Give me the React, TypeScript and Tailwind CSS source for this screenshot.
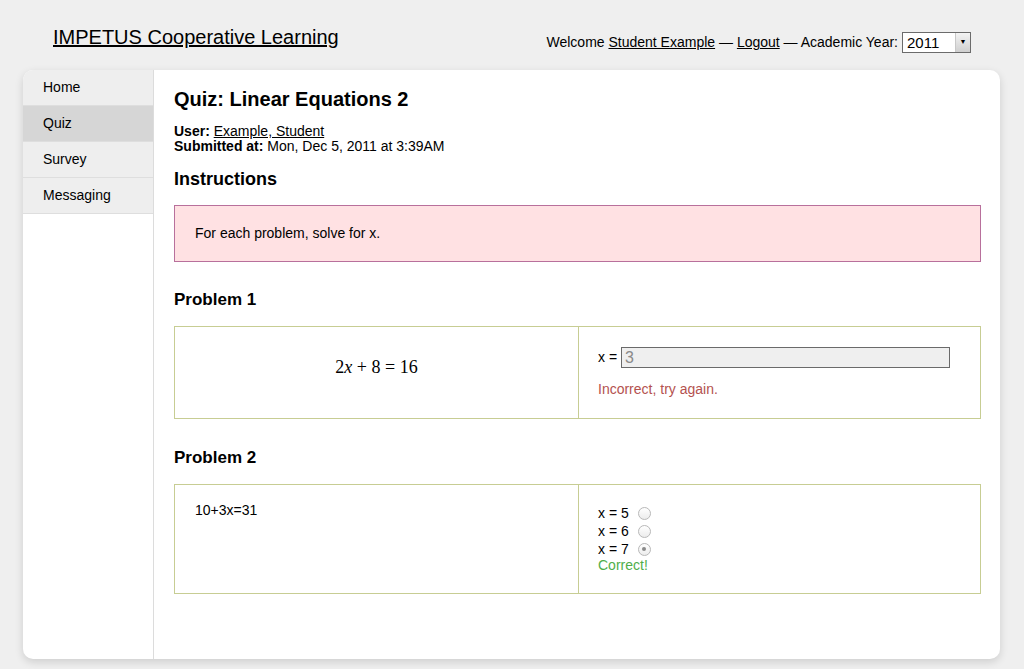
import React from 'react';

const navItems = ['Home', 'Quiz', 'Survey', 'Messaging'];

function Radio({ checked }: { checked?: boolean }) {
    return (
        <span className="ml-[9px] inline-flex h-[13px] w-[13px] items-center justify-center rounded-full border border-[#b8b8b8] bg-gradient-to-b from-white to-[#ececec]">
            {checked && <span className="h-[4px] w-[4px] rounded-full bg-[#8a8a8a]" />}
        </span>
    );
}

function App() {
    return (
        <div className="min-h-screen bg-[#efefef] font-['Liberation_Sans',Arial,sans-serif] text-black">
            <div className="flex h-[70px] items-start justify-between">
                <a href="#" className="ml-[53px] mt-[25px] text-[20px] leading-[24px] underline">
                    IMPETUS Cooperative Learning
                </a>
                <div className="mr-[53px] mt-[31px] flex items-center text-[14px]">
                    <span className="pt-[1px]">
                        Welcome <a href="#" className="underline">Student Example</a> — <a href="#" className="underline">Logout</a> — Academic Year:
                    </span>
                    <div className="ml-[4px] flex h-[21px] w-[69px] border border-[#6b6b6b] bg-white">
                        <span className="flex-1 pl-[4px] text-[15px] leading-[19px]">2011</span>
                        <span className="flex w-[15px] items-center justify-center border-l border-[#c8c8c8] bg-gradient-to-b from-[#f4f4f4] to-[#cfcfcf] text-[7px]">▼</span>
                    </div>
                </div>
            </div>

            <div className="ml-[23px] mr-[24px] flex h-[589px] overflow-hidden rounded-[10px] bg-white shadow-[0_3px_8px_rgba(0,0,0,0.14)]">
                <div className="w-[131px] border-r border-[#dcdcdc]">
                    {navItems.map((item) => (
                        <div
                            key={item}
                            className={`h-[36px] border-b border-[#dedede] pl-[20px] text-[14px] leading-[34px] ${item === 'Quiz' ? 'bg-[#d6d6d6]' : 'bg-[#eeeeee]'}`}
                        >
                            {item}
                        </div>
                    ))}
                </div>

                <div className="flex-1 pl-[20px] pr-[19px]">
                    <h1 className="mt-[17px] text-[20px] font-bold leading-[24px]">Quiz: Linear Equations 2</h1>
                    <div className="mt-[13px] text-[14px] leading-[15px]">
                        <div>
                            <b>User:</b> <a href="#" className="underline">Example, Student</a>
                        </div>
                        <div>
                            <b>Submitted at:</b> Mon, Dec 5, 2011 at 3:39AM
                        </div>
                    </div>

                    <h2 className="mt-[14px] text-[18px] font-bold leading-[22px]">Instructions</h2>
                    <div className="mt-[15px] border border-[#b8709c] bg-[#ffe1e3] py-[19px] pl-[20px] text-[14px] leading-[17px]">
                        For each problem, solve for x.
                    </div>

                    <h2 className="mt-[28px] text-[17px] font-bold leading-[20px]">Problem 1</h2>
                    <div className="mt-[16px] grid grid-cols-[404px_1fr] border border-[#c7cd93]">
                        <div className="border-r border-[#c7cd93] pt-[30px] text-center font-['Liberation_Serif',serif] text-[18px] leading-[20px]">
                            2<i>x</i> + 8 = 16
                        </div>
                        <div className="px-[19px] pb-[20px] pt-[20px]">
                            <div className="flex items-center text-[14px]">
                                <span>x =</span>
                                <div className="ml-[4px] h-[21px] w-[329px] border border-[#6a6a6a] bg-[#efefef] pl-[3px] text-[16px] leading-[19px] text-[#8a8a8a]">
                                    3
                                </div>
                            </div>
                            <div className="mt-[13px] text-[14px] leading-[17px] text-[#b4524f]">Incorrect, try again.</div>
                        </div>
                    </div>

                    <h2 className="mt-[29px] text-[17px] font-bold leading-[20px]">Problem 2</h2>
                    <div className="mt-[16px] grid grid-cols-[404px_1fr] border border-[#c7cd93]">
                        <div className="border-r border-[#c7cd93] pl-[20px] pt-[18px] text-[14px] leading-[15px]">10+3x=31</div>
                        <div className="pb-[20px] pl-[19px] pt-[19px] text-[14px]">
                            <div className="flex h-[18px] items-center">
                                x = 5 <Radio />
                            </div>
                            <div className="flex h-[18px] items-center">
                                x = 6 <Radio />
                            </div>
                            <div className="flex h-[18px] items-center">
                                x = 7 <Radio checked />
                            </div>
                            <div className="leading-[15px] text-[#4fae4a]">Correct!</div>
                        </div>
                    </div>
                </div>
            </div>
        </div>
    );
}

export default App;
